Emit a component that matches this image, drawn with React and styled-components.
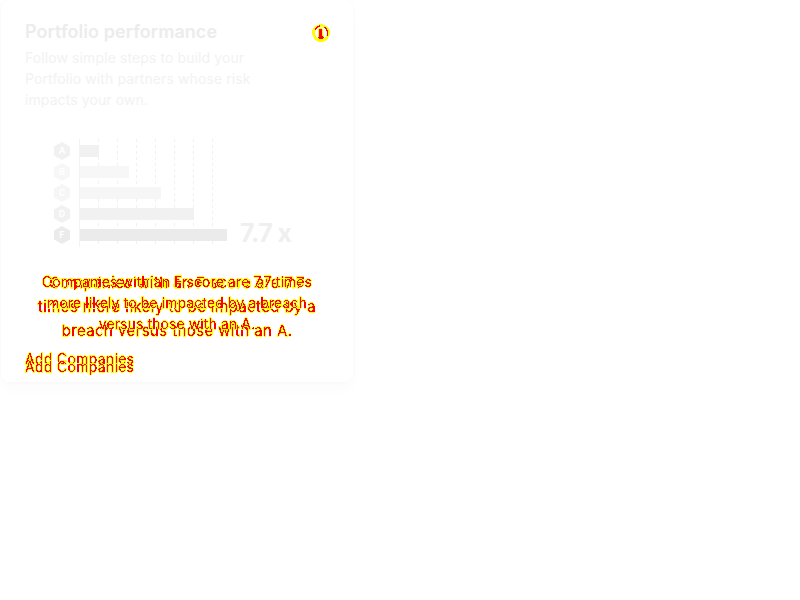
import React from "react";
import styled, { createGlobalStyle } from "styled-components";

const grades = [
  { label: "A", width: 19, tone: "#f1f1f1" },
  { label: "B", width: 49, tone: "#f7f7f7" },
  { label: "C", width: 81, tone: "#f6f6f6" },
  { label: "D", width: 114, tone: "#f1f1f1" },
  { label: "F", width: 147, tone: "#ebebeb" },
];

const App = () => {
  return (
    <Page>
      <GlobalStyle />
      <FilterDefs width="0" height="0" aria-hidden="true">
        <filter id="hard-edge" colorInterpolationFilters="sRGB" x="0" y="0" width="100%" height="100%">
          <feComponentTransfer>
            <feFuncR type="discrete" tableValues="1" />
            <feFuncG type="discrete" tableValues="0 1" />
            <feFuncB type="discrete" tableValues="0 1" />
            <feFuncA type="discrete" tableValues="0 1 1" />
          </feComponentTransfer>
        </filter>
      </FilterDefs>
      <Card>
        <Header>
          <div>
            <Title>Portfolio performance</Title>
            <Intro>Follow simple steps to build your Portfolio with partners whose risk impacts your own.</Intro>
          </div>
          <InfoBadge>
            <svg width="18" height="18" viewBox="0 0 18 18" fill="none">
              <circle cx="9" cy="9" r="7.4" fill="#ffffff" stroke="#ffff00" strokeWidth="2.6" />
              <path d="M3 5.5A7 7 0 0 1 8 2M12 3a7 7 0 0 1 3 9" stroke="#ff0000" strokeWidth="1.4" />
              <path d="M8.5 4.5v8M6 13.5h6" stroke="#ffff00" strokeWidth="4" />
              <path d="M8.5 5v7.5M6.5 13.5h5" stroke="#ff0000" strokeWidth="2.2" />
            </svg>
          </InfoBadge>
        </Header>

        <Chart>
          <Grades>
            {grades.map((g) => (
              <Hexagon key={g.label} $tone={g.tone}>{g.label}</Hexagon>
            ))}
          </Grades>
          <Plot>
            {grades.map((g) => (
              <Bar key={g.label} $tone={g.tone} style={{ width: g.width }} />
            ))}
          </Plot>
          <Multiple>7.7 x</Multiple>
        </Chart>

        <Summary>
          <SummaryLine>Companies with an F score are 7.7 times more likely to be impacted by a breach versus those with an A.</SummaryLine>
          <SummaryGhost>Companies with an F score are 7.7 times more likely to be impacted by a breach versus those with an A.</SummaryGhost>
        </Summary>

        <Footer>
          <AddLink>Add Companies</AddLink>
          <AddGhost>Add Companies</AddGhost>
        </Footer>
      </Card>
    </Page>
  );
};

const GlobalStyle = createGlobalStyle`
  html, body {
    margin: 0;
    background: #fff;
    font-family: "Inter", "Liberation Sans", sans-serif;
  }
`;

const Page = styled.div`
  width: 800px;
  height: 600px;
  overflow: hidden;
`;

const FilterDefs = styled.svg`
  display: block;
  width: 0;
  height: 0;
`;

const Card = styled.div`
  width: 352px;
  height: 382px;
  margin-left: 1px;
  padding: 20px 24px 0;
  box-sizing: border-box;
  border-radius: 8px;
  box-shadow: 0 0 3px #f6f6f6, 0 8px 14px #fcfcfc;
`;

const Header = styled.div`
  display: flex;
  justify-content: space-between;
  align-items: flex-start;
`;

const Title = styled.h2`
  margin: 0 0 3px;
  font-size: 18px;
  line-height: 24px;
  font-weight: 600;
  letter-spacing: 0.05px;
  color: #ececec;
`;

const Intro = styled.p`
  margin: 0;
  width: 240px;
  font-size: 14px;
  line-height: 21px;
  letter-spacing: 0.1px;
  color: #f2f2f2;
`;

const InfoBadge = styled.div`
  margin: 4px -1px 0 0;
  width: 18px;
  height: 18px;
  filter: url(#hard-edge);
`;

const Chart = styled.div`
  display: flex;
  align-items: flex-start;
  margin: 29px 0 0 29px;
`;

const Grades = styled.div`
  display: flex;
  flex-direction: column;
  gap: 3px;
  margin-right: 9px;
  padding-top: 3px;
`;

const Hexagon = styled.div`
  width: 16px;
  height: 18px;
  clip-path: polygon(50% 0, 100% 25%, 100% 75%, 50% 100%, 0 75%, 0 25%);
  background: ${(p) => p.$tone};
  color: #fff;
  font-size: 9px;
  font-weight: 700;
  line-height: 18px;
  text-align: center;
`;

const Plot = styled.div`
  position: relative;
  display: flex;
  flex-direction: column;
  gap: 9px;
  width: 134px;
  padding: 6px 0;
  border-left: 1px solid #f3f3f3;

  &::before {
    content: "";
    position: absolute;
    inset: 0;
    background-image: repeating-linear-gradient(to right, transparent 0 18px, #f0f0f0 18px 19px);
    -webkit-mask-image: repeating-linear-gradient(to bottom, #000 0 3px, transparent 3px 6px);
    mask-image: repeating-linear-gradient(to bottom, #000 0 3px, transparent 3px 6px);
  }
`;

const Bar = styled.div`
  position: relative;
  height: 12px;
  background: ${(p) => p.$tone};
`;

const Multiple = styled.div`
  margin: 79px 0 0 26px;
  font-size: 25px;
  line-height: 30px;
  font-weight: 700;
  letter-spacing: -0.5px;
  color: #efefef;
`;

const Summary = styled.div`
  position: relative;
  margin-top: 23px;
  text-align: center;
`;

const SummaryLine = styled.p`
  margin: 0 auto;
  width: 296px;
  font-size: 15px;
  line-height: 24px;
  letter-spacing: 0.4px;
  color: #ff0000;
  -webkit-text-stroke: 1px #ffff00;
  paint-order: stroke fill;
  filter: url(#hard-edge);
`;

const SummaryGhost = styled(SummaryLine)`
  position: absolute;
  top: 0;
  left: 0;
  right: 0;
  width: 290px;
  font-size: 14px;
  line-height: 21px;
  letter-spacing: 0.1px;
`;

const Footer = styled.div`
  position: relative;
  margin-top: 8px;
`;

const AddLink = styled.div`
  font-size: 14px;
  line-height: 16px;
  letter-spacing: 0.3px;
  color: #ff0000;
  -webkit-text-stroke: 1px #ffff00;
  paint-order: stroke fill;
  filter: url(#hard-edge);
`;

const AddGhost = styled(AddLink)`
  position: absolute;
  top: 8px;
  left: 0;
`;

export default App;
